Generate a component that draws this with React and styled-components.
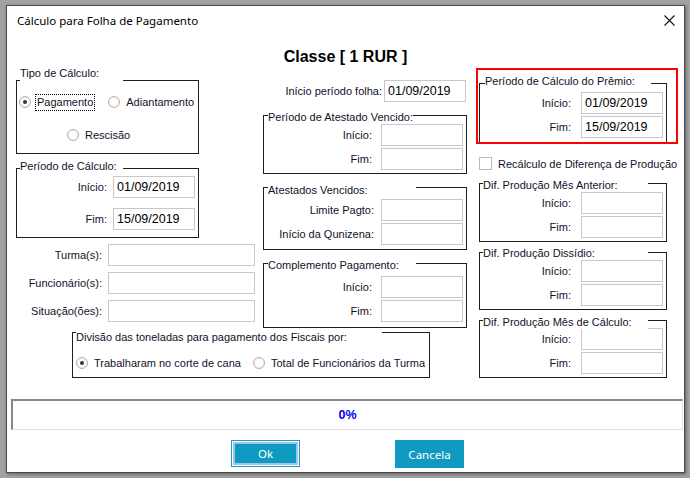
import React from "react";
import styled, { createGlobalStyle } from "styled-components";

const Global = createGlobalStyle`
  html, body { margin: 0; padding: 0; background: #a2a2a2; }
  body { font-family: "Liberation Sans", Arial, sans-serif; overflow: hidden; }
`;

const Screen = styled.div`
  width: 690px;
  height: 478px;
  box-sizing: border-box;
  padding: 5px 0 0 6px;
  background: #a2a2a2;
`;

const Window = styled.div`
  width: 679px;
  height: 468px;
  box-sizing: border-box;
  border: 1px solid #4b4b4b;
  background: #fff;
  box-shadow: 1px 1px 3px rgba(0, 0, 0, 0.45);
  display: flex;
  flex-direction: column;
`;

const TitleBar = styled.div`
  height: 28px;
  display: flex;
  align-items: center;
  justify-content: space-between;
  padding: 0 9px 0 10px;
`;

const TitleText = styled.span`
  font-family: "Noto Sans", "Open Sans", sans-serif;
  font-size: 11.5px;
  color: #000;
`;

const CloseBtn = styled.span`
  display: flex;
  width: 11px;
  height: 11px;
`;

const Header = styled.div`
  margin-top: 12px;
  height: 22px;
  line-height: 22px;
  text-align: center;
  font-weight: bold;
  font-size: 16px;
  color: #000;
`;

const Main = styled.div`
  display: flex;
  gap: 9px;
  padding: 0 6px 0 9px;
`;

const LeftMid = styled.div`
  width: 451px;
  display: flex;
  flex-direction: column;
`;

const TopRow = styled.div`
  display: flex;
  gap: 8px;
  align-items: flex-start;
`;

const Column = styled.div`
  width: ${(p) => p.$w}px;
  display: flex;
  flex-direction: column;
  flex-shrink: 0;
`;

const GroupBox = styled.div`
  position: relative;
  box-sizing: border-box;
  width: ${(p) => p.$w}px;
  margin: ${(p) => p.$mt || 0}px 0 0 ${(p) => p.$ml || 0}px;
  padding: ${(p) => p.$pt || 0}px ${(p) => p.$pr ?? 3}px ${(p) => p.$pb || 0}px
    ${(p) => p.$pl ?? 0}px;
  border: 1px solid #1f1f1f;
  display: flex;
  flex-direction: column;
  gap: ${(p) => p.$gap || 0}px;
  flex-shrink: 0;
`;

const Legend = styled.span`
  position: absolute;
  left: ${(p) => p.$left ?? 3}px;
  top: ${(p) => p.$top}px;
  width: ${(p) => p.$w}px;
  height: ${(p) => p.$h ?? 13}px;
  line-height: 13px;
  background: #fff;
  font-size: 11px;
  color: #14102a;
  white-space: nowrap;
`;

const HighlightBox = styled.div`
  box-sizing: border-box;
  height: 76px;
  border: 2px solid #ff0000;
  overflow: hidden;
  padding: 13px 0 0 1px;
`;

const Field = styled.div`
  display: flex;
  align-items: center;
  justify-content: flex-end;
  gap: ${(p) => p.$gap ?? 9}px;
  height: 22px;
  margin-top: ${(p) => p.$mt || 0}px;
  padding-right: ${(p) => p.$pr || 0}px;
`;

const Label = styled.span`
  font-size: 11px;
  color: #14102a;
  white-space: nowrap;
`;

const TextBox = styled.input.attrs({ readOnly: true, type: "text" })`
  box-sizing: border-box;
  width: ${(p) => p.$w || 82}px;
  height: 22px;
  margin: 0;
  padding: 0 0 0 3px;
  border: 1px solid #c8c8c8;
  background: #fff;
  font-family: "Liberation Sans", Arial, sans-serif;
  font-size: 12.5px;
  color: #000;
  outline: none;
`;

const RadioRow = styled.div`
  display: flex;
  align-items: center;
  gap: ${(p) => p.$gap || 13}px;
  height: 18px;
  margin-left: ${(p) => p.$ml || 0}px;
  margin-top: ${(p) => p.$mt || 0}px;
`;

const RadioItem = styled.label`
  display: flex;
  align-items: center;
`;

const RadioCircle = styled.span`
  box-sizing: border-box;
  width: 12px;
  height: 12px;
  border-radius: 50%;
  border: 1px solid #b9aea4;
  background: radial-gradient(circle, #ffffff 0 35%, #ece6e1 100%);
  display: flex;
  align-items: center;
  justify-content: center;
  margin-right: 4px;
  &::after {
    content: "";
    display: ${(p) => (p.$checked ? "block" : "none")};
    width: 4px;
    height: 4px;
    border-radius: 50%;
    background: #27324a;
  }
`;

const RadioText = styled.span`
  font-size: 11px;
  color: #14102a;
  padding: 1px 1px;
  border: 1px dotted ${(p) => (p.$focus ? "#000" : "transparent")};
  line-height: 13px;
  white-space: nowrap;
`;

const CheckRow = styled.label`
  display: flex;
  align-items: center;
  gap: 6px;
  height: 13px;
  margin: 13px 0 0 3px;
`;

const CheckBox = styled.span`
  box-sizing: border-box;
  width: 13px;
  height: 13px;
  border: 1px solid #bcbcbc;
  background: #fff;
`;

const Progress = styled.div`
  box-sizing: border-box;
  margin: 21px 0 0 4px;
  width: 672px;
  height: 31px;
  border-top: 2px solid #878787;
  border-left: 2px solid #878787;
  border-right: 1px solid #e2e2e2;
  border-bottom: 1px solid #e2e2e2;
  display: flex;
  align-items: center;
  justify-content: center;
  font-weight: bold;
  font-size: 12.5px;
  color: #0000f2;
`;

const ButtonRow = styled.div`
  margin-top: 10px;
  display: flex;
  justify-content: center;
  align-items: flex-start;
  gap: 95px;
  padding-left: 4px;
`;

const Button = styled.button`
  box-sizing: border-box;
  width: 69px;
  height: ${(p) => (p.$default ? 27 : 28)}px;
  margin: 0;
  padding: 0;
  background: #0f9bc1;
  color: #fff;
  font-family: "Noto Sans", "Open Sans", sans-serif;
  font-size: 11.5px;
  border: ${(p) => (p.$default ? "1px solid #1a9cc2" : "none")};
  box-shadow: ${(p) =>
    p.$default ? "inset 0 0 0 1px #ffffff, inset 0 0 0 3px #9fc3e3" : "none"};
  cursor: default;
`;

function DateGroup({ title, w, mt, ml, pt, pb, legendTop, legendW, legendLeft, rows, gap = 2, labelGap = 9 }) {
  return (
    <GroupBox $w={w} $mt={mt} $ml={ml} $pt={pt} $pb={pb} $gap={gap}>
      <Legend $top={legendTop} $w={legendW} $left={legendLeft}>
        {title}
      </Legend>
      {rows.map((r) => (
        <Field key={r.label} $gap={labelGap}>
          <Label>{r.label}</Label>
          <TextBox value={r.value || ""} />
        </Field>
      ))}
    </GroupBox>
  );
}

export default function App() {
  return (
    <>
      <Global />
      <Screen>
        <Window>
          <TitleBar>
            <TitleText>Cálculo para Folha de Pagamento</TitleText>
            <CloseBtn>
              <svg width="11" height="11" viewBox="0 0 11 11">
                <path d="M0.5 0.5 L10.5 10.5 M10.5 0.5 L0.5 10.5" stroke="#111" strokeWidth="1.1" fill="none" />
              </svg>
            </CloseBtn>
          </TitleBar>
          <Header>Classe [ 1 RUR ]</Header>
          <Main>
            <LeftMid>
              <TopRow>
                <Column $w={239}>
                  <GroupBox $w={183} $mt={12} $pt={12} $pb={9} $pl={2}>
                    <Legend $top={-14} $w={103} $h={15}>
                      Tipo de Cálculo:
                    </Legend>
                    <RadioRow>
                      <RadioItem>
                        <RadioCircle $checked />
                        <RadioText $focus>Pagamento</RadioText>
                      </RadioItem>
                      <RadioItem>
                        <RadioCircle />
                        <RadioText>Adiantamento</RadioText>
                      </RadioItem>
                    </RadioRow>
                    <RadioRow $ml={48} $mt={15}>
                      <RadioItem>
                        <RadioCircle />
                        <RadioText>Rescisão</RadioText>
                      </RadioItem>
                    </RadioRow>
                  </GroupBox>
                  <DateGroup
                    title="Período de Cálculo:"
                    w={183}
                    mt={14}
                    pt={7}
                    pb={7}
                    gap={10}
                    labelGap={6}
                    legendTop={-9}
                    legendW={103}
                    rows={[
                      { label: "Início:", value: "01/09/2019" },
                      { label: "Fim:", value: "15/09/2019" },
                    ]}
                  />
                  <Field $gap={6} $mt={6}>
                    <Label>Turma(s):</Label>
                    <TextBox $w={147} value="" />
                  </Field>
                  <Field $gap={6} $mt={6}>
                    <Label>Funcionário(s):</Label>
                    <TextBox $w={147} value="" />
                  </Field>
                  <Field $gap={6} $mt={6}>
                    <Label>Situação(ões):</Label>
                    <TextBox $w={147} value="" />
                  </Field>
                </Column>
                <Column $w={204}>
                  <Field $gap={2} $mt={12} $pr={1}>
                    <Label>Início período folha:</Label>
                    <TextBox value="01/09/2019" />
                  </Field>
                  <DateGroup
                    title="Período de Atestado Vencido:"
                    w={204}
                    mt={13}
                    pt={8}
                    pb={3}
                    legendTop={-5}
                    legendLeft={4}
                    legendW={145}
                    rows={[{ label: "Início:" }, { label: "Fim:" }]}
                  />
                  <DateGroup
                    title="Atestados Vencidos:"
                    w={204}
                    mt={13}
                    pt={11}
                    pb={4}
                    legendTop={-4}
                    legendLeft={4}
                    legendW={148}
                    labelGap={7}
                    rows={[{ label: "Limite Pagto:" }, { label: "Início da Qunizena:" }]}
                  />
                  <DateGroup
                    title="Complemento Pagamento:"
                    w={204}
                    mt={13}
                    pt={12}
                    pb={5}
                    legendTop={-5}
                    legendLeft={4}
                    legendW={148}
                    rows={[{ label: "Início:" }, { label: "Fim:" }]}
                  />
                </Column>
              </TopRow>
              <GroupBox $w={358} $mt={4} $ml={56} $pt={21} $pb={5} $pl={3}>
                <Legend $top={-2} $w={306}>
                  Divisão das toneladas para pagamento dos Fiscais por:
                </Legend>
                <RadioRow $gap={10}>
                  <RadioItem>
                    <RadioCircle $checked />
                    <RadioText>Trabalharam no corte de cana</RadioText>
                  </RadioItem>
                  <RadioItem>
                    <RadioCircle />
                    <RadioText>Total de Funcionários da Turma</RadioText>
                  </RadioItem>
                </RadioRow>
              </GroupBox>
            </LeftMid>
            <Column $w={202}>
              <HighlightBox>
                <DateGroup
                  title="Período de Cálculo do Prêmio:"
                  w={188}
                  mt={0}
                  pt={8}
                  pb={10}
                  legendTop={-9}
                  legendLeft={5}
                  legendW={166}
                  labelGap={10}
                  rows={[
                    { label: "Início:", value: "01/09/2019" },
                    { label: "Fim:", value: "15/09/2019" },
                  ]}
                />
              </HighlightBox>
              <CheckRow>
                <CheckBox />
                <Label>Recálculo de Diferença de Produção</Label>
              </CheckRow>
              <DateGroup
                title="Dif. Produção Mês Anterior:"
                w={188}
                mt={13}
                ml={3}
                pt={8}
                pb={3}
                legendTop={-5}
                legendW={165}
                labelGap={10}
                rows={[{ label: "Início:" }, { label: "Fim:" }]}
              />
              <DateGroup
                title="Dif. Produção Dissídio:"
                w={188}
                mt={10}
                ml={3}
                pt={7}
                pb={3}
                legendTop={-6}
                legendW={165}
                labelGap={10}
                rows={[{ label: "Início:" }, { label: "Fim:" }]}
              />
              <DateGroup
                title="Dif. Produção Mês de Cálculo:"
                w={188}
                mt={10}
                ml={3}
                pt={7}
                pb={3}
                legendTop={-5}
                legendW={165}
                labelGap={10}
                rows={[{ label: "Início:" }, { label: "Fim:" }]}
              />
            </Column>
          </Main>
          <Progress>0%</Progress>
          <ButtonRow>
            <Button $default>Ok</Button>
            <Button>Cancela</Button>
          </ButtonRow>
        </Window>
      </Screen>
    </>
  );
}
